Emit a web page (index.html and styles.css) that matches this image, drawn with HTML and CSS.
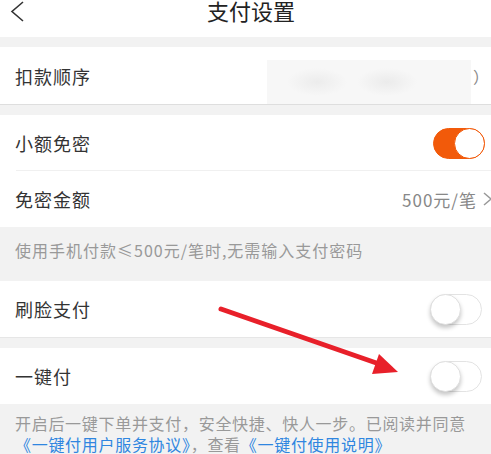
FILE: index.html
```html
<!DOCTYPE html>
<html lang="zh">
<head>
<meta charset="utf-8">
<title>支付设置</title>
<link rel="stylesheet" href="styles.css">
</head>
<body>
<div class="page">
  <header class="topbar">
    <svg class="back" width="16" height="22" viewBox="0 0 16 22"><path d="M14 2 L3 11.5 L14 21" fill="none" stroke="#333" stroke-width="1.6"/></svg>
    <div class="title">支付设置</div>
  </header>

  <section class="group first">
    <div class="row">
      <span class="label">扣款顺序</span>
      <span class="blurbox"></span>
      <span class="paren">）</span>
    </div>
  </section>

  <section class="group">
    <div class="row divided">
      <span class="label">小额免密</span>
      <span class="toggle on"><span class="knob"></span></span>
    </div>
    <div class="row">
      <span class="label">免密金额</span>
      <span class="value">500元/笔</span>
      <svg class="chev" width="10" height="16" viewBox="0 0 10 16"><path d="M1 2 L8 8 L1 14" fill="none" stroke="#999" stroke-width="1.5"/></svg>
    </div>
  </section>

  <p class="hint">使用手机付款≤500元/笔时,无需输入支付密码</p>

  <section class="group lined">
    <div class="row">
      <span class="label">刷脸支付</span>
      <span class="toggle"><span class="knob"></span></span>
    </div>
  </section>

  <section class="group">
    <div class="row">
      <span class="label">一键付</span>
      <span class="toggle"><span class="knob"></span></span>
    </div>
  </section>

  <p class="foot">开启后一键下单并支付，安全快捷、快人一步。已阅读并同意<br><a class="link">《一键付用户服务协议》</a>，查看<a class="link">《一键付使用说明》</a></p>

  <svg class="arrow" width="491" height="454" viewBox="0 0 491 454">
    <line x1="221" y1="309" x2="385" y2="366" stroke="#e8202a" stroke-width="5" stroke-linecap="round"/>
    <polygon points="398,372 379,354 372,374" fill="#e8202a"/>
  </svg>
</div>
</body>
</html>
```

FILE: styles.css
```css
* { box-sizing: border-box; }
html, body { margin: 0; padding: 0; }
body {
  background: #f2f2f2;
  font-family: "Noto Sans CJK SC", "Noto Sans", sans-serif;
  color: #333;
  width: 491px;
  height: 454px;
  overflow: hidden;
}
.page { position: relative; width: 491px; height: 454px; overflow: hidden; }
.topbar {
  height: 37px;
  background: #fff;
  display: flex;
  align-items: flex-start;
  padding-left: 9px;
}
.back { flex: none; }
.title {
  flex: 1;
  text-align: center;
  font-size: 22px;
  line-height: 24px;
  margin-top: -2px;
  padding-right: 14px;
  color: #222;
}
.group { background: #fff; margin-top: 10px; }
.group.first { border-bottom: 1px solid #dedede; }
.group.lined { border-bottom: 1px solid #e6e6e6; margin-top: 0; }
.row {
  height: 56px;
  display: flex;
  align-items: center;
  padding-left: 15px;
  position: relative;
}
.group.first .row { height: 57px; }
.row.divided::after {
  content: "";
  position: absolute;
  left: 16px; right: 0; bottom: 0;
  height: 1px;
  background: #f0f0f0;
}
.label {
  font-size: 18px;
  letter-spacing: 1px;
  color: #333;
  flex: 1;
}
.blurbox {
  align-self: flex-end;
  width: 204px;
  height: 44px;
  background:
    radial-gradient(ellipse 30px 14px at 50px 22px, #ececec, transparent),
    radial-gradient(ellipse 30px 14px at 120px 22px, #ebebeb, transparent),
    #f7f7f7;
  margin-right: 2px;
}
.paren { font-size: 16px; color: #888; width: 18px; }
.value {
  font-size: 17px;
  letter-spacing: 1px;
  color: #888;
}
.chev { flex: none; margin-left: 6px; margin-right: -2px; }
.toggle {
  width: 52px;
  height: 31px;
  border-radius: 16px;
  border: 1px solid #e3e3e3;
  background: #fff;
  margin-right: 9px;
  position: relative;
  flex: none;
}
.toggle .knob {
  position: absolute;
  top: -1px; left: -1px;
  width: 31px; height: 31px;
  border-radius: 50%;
  background: #fff;
  border: 1px solid #e0e0e0;
  box-shadow: 0 3px 4px rgba(0,0,0,0.22);
}
.toggle.on {
  background: #f25a0a;
  border-color: #f25a0a;
  margin-right: 6px;
}
.toggle.on .knob {
  left: auto; right: -1px;
  border: 1.5px solid #f25a0a;
  box-shadow: none;
}
.hint {
  margin: 0;
  height: 54px;
  padding: 11px 15px 0;
  font-size: 16px;
  letter-spacing: 1px;
  color: #999;
}
.foot {
  margin: 0;
  padding: 9px 10px 0 15px;
  font-size: 16px;
  line-height: 21px;
  letter-spacing: 0.7px;
  color: #999;
  white-space: nowrap;
}
.link { color: #2f86e0; }
.arrow { position: absolute; top: 0; left: 0; pointer-events: none; }
```
